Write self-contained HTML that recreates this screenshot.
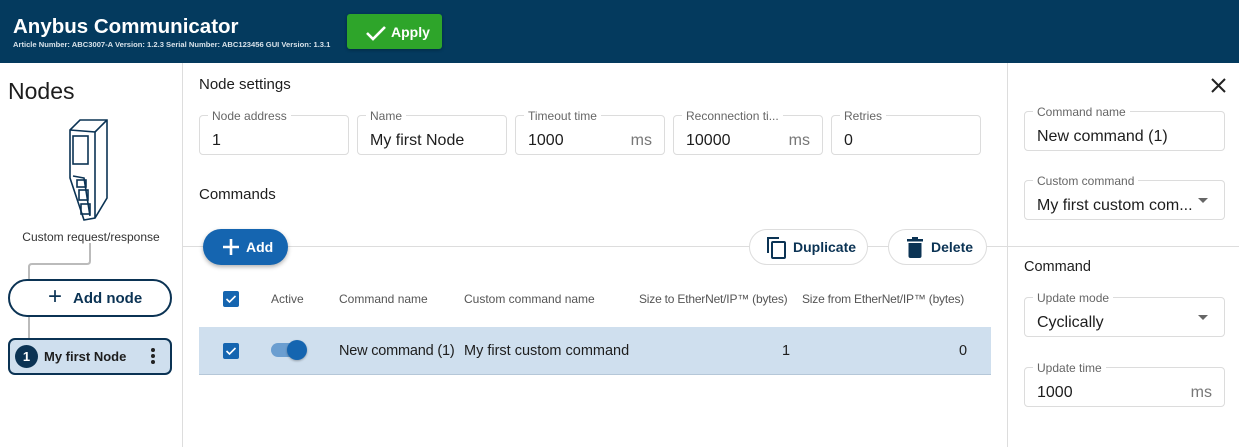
<!DOCTYPE html>
<html><head><style>
*{box-sizing:border-box;margin:0;padding:0}
body{width:1239px;height:447px;overflow:hidden;background:#fff;font-family:"Liberation Sans",Roboto,sans-serif;color:#1d1d1d;position:relative}
.a{position:absolute}
.hdr{left:0;top:0;width:1239px;height:63px;background:#043a5e}
.fld{position:absolute;border:1px solid #dcdcdc;border-radius:4px;height:40px}
.fld .lb{position:absolute;top:-7px;left:8px;background:#fff;padding:0 4px;font-size:12px;color:#666;white-space:nowrap;line-height:14px}
.fld .v{position:absolute;left:12px;top:16px;font-size:16px;color:#1d1d1d;line-height:18px;white-space:nowrap}
.fld .u{position:absolute;right:12px;top:16px;font-size:16px;color:#777;line-height:18px}
.th{font-size:12px;color:#555;top:292px;white-space:nowrap}
.cb{width:16px;height:16px;background:#1565b0;border-radius:2px}
.pill{border:1px solid #ddd;border-radius:18px;height:36px;background:#fff;font-size:14px;color:#0b3354;font-weight:bold}
</style></head><body>
<div class="a hdr"></div>
<div class="a" style="left:13px;top:15px;font-size:20.5px;font-weight:bold;color:#fff">Anybus Communicator</div>
<div class="a" style="left:13px;top:40px;font-size:7.6px;color:#d8e2ea;font-weight:bold;white-space:nowrap">Article Number: ABC3007-A Version: 1.2.3 Serial Number: ABC123456 GUI Version: 1.3.1</div>
<div class="a" style="left:347px;top:14px;width:95px;height:35px;background:#2ea52a;border-radius:3px;box-shadow:0 1px 3px rgba(0,0,0,.3)"></div>
<svg class="a" style="left:365px;top:24px" width="22" height="18"><path d="M2 9 L8 15 L20 3" stroke="#fff" stroke-width="2.6" fill="none"/></svg>
<div class="a" style="left:391px;top:24px;font-size:14px;font-weight:bold;color:#fff">Apply</div>

<div class="a" style="left:182px;top:63px;width:1px;height:384px;background:#ddd"></div>
<div class="a" style="left:1007px;top:63px;width:1px;height:384px;background:#ddd"></div>
<div class="a" style="left:183px;top:246px;width:1056px;height:1px;background:#ddd"></div>

<div class="a" style="left:8px;top:78px;font-size:23px;color:#1d1d1d">Nodes</div>
<svg class="a" style="left:62px;top:118px" width="50" height="105" viewBox="0 0 50 105" fill="none" stroke="#0b3354" stroke-width="1.6">
<path d="M8 12 L18 2 L45 2 L45 80 L33 100 L22 102 L8 60 Z"/><path d="M8 12 L33 14 L33 100"/><path d="M33 14 L45 2"/>
<rect x="11" y="18" width="15" height="28"/><path d="M11 58 L22 60 L28 98"/><rect x="15" y="62" width="9" height="7"/><rect x="17" y="72" width="9" height="10"/><rect x="19" y="86" width="9" height="10"/>
</svg>
<div class="a" style="left:0;top:230px;width:182px;text-align:center;font-size:12px;color:#333">Custom request/response</div>
<svg class="a" style="left:25px;top:243px" width="70" height="100"><path d="M65 0 V18 Q65 21 62 21 H7 Q4 21 4 24 V36 M4 73 V95" stroke="#bbb" stroke-width="2" fill="none"/></svg>
<div class="a" style="left:8px;top:279px;width:164px;height:38px;border:2px solid #0b3354;border-radius:19px"></div>
<div class="a" style="left:48px;top:285px;font-size:24px;color:#0b3354;line-height:24px">+</div>
<div class="a" style="left:73px;top:290px;font-size:15px;font-weight:bold;color:#0b3354">Add node</div>
<div class="a" style="left:8px;top:338px;width:164px;height:37px;border:2px solid #0b3354;border-radius:7px;background:#cfdfee"></div>
<div class="a" style="left:15px;top:345px;width:23px;height:23px;border-radius:50%;background:#0b3354;color:#fff;font-size:13px;font-weight:bold;text-align:center;line-height:23px">1</div>
<div class="a" style="left:44px;top:349px;font-size:13px;font-weight:bold;color:#1d1d1d">My first Node</div>
<div class="a" style="left:151px;top:348px;width:4px;height:4px;border-radius:50%;background:#222;box-shadow:0 6px 0 #222,0 12px 0 #222"></div>

<div class="a" style="left:199px;top:76px;font-size:15px">Node settings</div>
<div class="fld" style="left:199px;top:115px;width:150px"><span class="lb">Node address</span><span class="v">1</span></div>
<div class="fld" style="left:357px;top:115px;width:150px"><span class="lb">Name</span><span class="v">My first Node</span></div>
<div class="fld" style="left:515px;top:115px;width:150px"><span class="lb">Timeout time</span><span class="v">1000</span><span class="u">ms</span></div>
<div class="fld" style="left:673px;top:115px;width:150px"><span class="lb">Reconnection ti...</span><span class="v">10000</span><span class="u">ms</span></div>
<div class="fld" style="left:831px;top:115px;width:150px"><span class="lb">Retries</span><span class="v">0</span></div>
<div class="a" style="left:199px;top:186px;font-size:15px">Commands</div>

<div class="a" style="left:203px;top:229px;width:85px;height:36px;border-radius:18px;background:#1565b0;box-shadow:0 2px 4px rgba(0,0,0,.3)"></div>
<svg class="a" style="left:222px;top:238px" width="18" height="18"><path d="M9 1 V17 M1 9 H17" stroke="#fff" stroke-width="2.6"/></svg>
<div class="a" style="left:246px;top:239px;font-size:14px;font-weight:bold;color:#fff">Add</div>
<div class="a pill" style="left:749px;top:229px;width:119px"></div>
<svg class="a" style="left:767px;top:236px" width="20" height="23"><path d="M1 17 V2 H12" stroke="#0b3354" stroke-width="2" fill="none"/><rect x="5" y="6" width="13" height="16" rx="1" stroke="#0b3354" stroke-width="2" fill="none"/></svg>
<div class="a" style="left:793px;top:239px;font-size:14px;font-weight:bold;color:#0b3354">Duplicate</div>
<div class="a pill" style="left:888px;top:229px;width:99px"></div>
<svg class="a" style="left:907px;top:237px" width="16" height="21"><rect x="0" y="2" width="16" height="2.5" fill="#0b3354"/><rect x="5" y="0" width="6" height="3" fill="#0b3354"/><path d="M1.5 6 H14.5 V19 Q14.5 21 12.5 21 H3.5 Q1.5 21 1.5 19Z" fill="#0b3354"/></svg>
<div class="a" style="left:931px;top:239px;font-size:14px;font-weight:bold;color:#0b3354">Delete</div>

<div class="a cb" style="left:223px;top:291px"></div>
<svg class="a" style="left:223px;top:291px" width="16" height="16"><path d="M3.5 8 L6.5 11 L12.5 5" stroke="#fff" stroke-width="1.6" fill="none"/></svg>
<div class="a th" style="left:271px">Active</div>
<div class="a th" style="left:339px">Command name</div>
<div class="a th" style="left:464px">Custom command name</div>
<div class="a th" style="left:639px;letter-spacing:-0.2px">Size to EtherNet/IP™ (bytes)</div>
<div class="a th" style="left:802px;letter-spacing:-0.2px">Size from EtherNet/IP™ (bytes)</div>
<div class="a" style="left:199px;top:327px;width:792px;height:48px;background:#cfdfee;border-bottom:1px solid #b5c7d8"></div>
<div class="a cb" style="left:223px;top:343px"></div>
<svg class="a" style="left:223px;top:343px" width="16" height="16"><path d="M3.5 8 L6.5 11 L12.5 5" stroke="#fff" stroke-width="1.6" fill="none"/></svg>
<div class="a" style="left:271px;top:343px;width:34px;height:14px;border-radius:7px;background:#6b9ed0"></div>
<div class="a" style="left:287px;top:340px;width:20px;height:20px;border-radius:50%;background:#1565b0;box-shadow:0 1px 2px rgba(0,0,0,.3)"></div>
<div class="a" style="left:339px;top:343px;font-size:14.5px;letter-spacing:-0.2px">New command (1)</div>
<div class="a" style="left:464px;top:343px;font-size:14.5px">My first custom command</div>
<div class="a" style="left:782px;top:343px;font-size:14.5px">1</div>
<div class="a" style="left:959px;top:343px;font-size:14.5px">0</div>

<svg class="a" style="left:1211px;top:78px" width="15" height="15"><path d="M1 1 L14 14 M14 1 L1 14" stroke="#222" stroke-width="2"/></svg>
<div class="fld" style="left:1024px;top:111px;width:201px"><span class="lb">Command name</span><span class="v">New command (1)</span></div>
<div class="fld" style="left:1024px;top:180px;width:201px"><span class="lb">Custom command</span><span class="v">My first custom com...</span></div>
<div class="a" style="left:1198px;top:198px;border-left:5px solid transparent;border-right:5px solid transparent;border-top:5px solid #666"></div>
<div class="a" style="left:1024px;top:259px;font-size:14.5px">Command</div>
<div class="fld" style="left:1024px;top:297px;width:201px"><span class="lb">Update mode</span><span class="v">Cyclically</span></div>
<div class="a" style="left:1198px;top:315px;border-left:5px solid transparent;border-right:5px solid transparent;border-top:5px solid #666"></div>
<div class="fld" style="left:1024px;top:367px;width:201px"><span class="lb">Update time</span><span class="v">1000</span><span class="u">ms</span></div>
</body></html>
